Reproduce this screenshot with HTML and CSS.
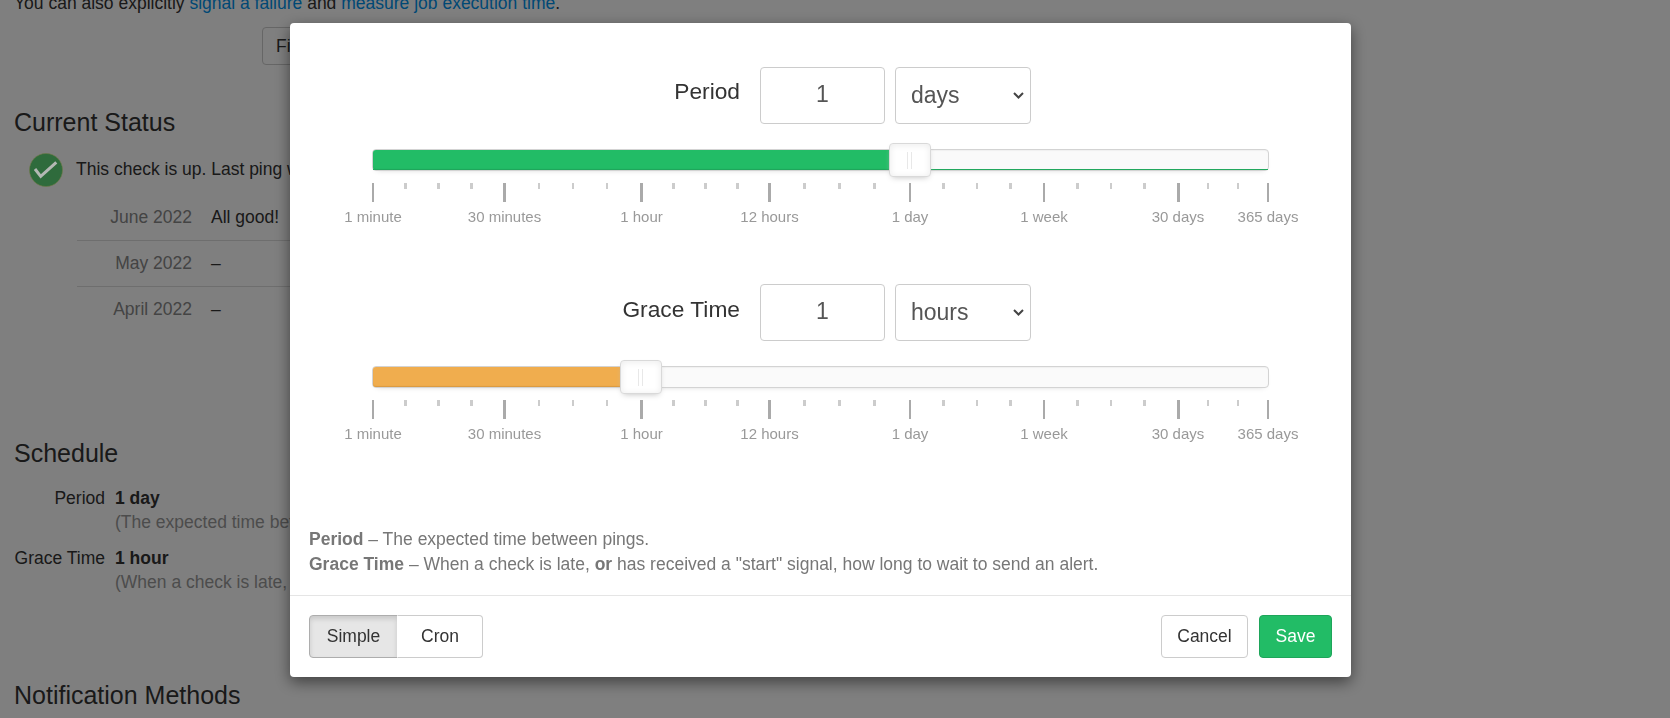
FILE: index.html
```html
<!DOCTYPE html>
<html lang="en">
<head>
    <meta charset="UTF-8">
    <meta name="viewport" content="width=device-width, initial-scale=1.0">
    <title>Check Details</title>
    <link rel="stylesheet" href="styles.css">
</head>
<body>
    <div class="page">
        <p class="intro">You can also explicitly <a href="#">signal a failure</a> and <a href="#">measure job execution time</a>.</p>
        <div class="intro-actions"><button type="button" class="btn">Filtering Rules</button></div>

        <h2 class="status-title">Current Status</h2>
        <div class="status-line">
            <svg class="status-icon" viewBox="0 0 34 34" aria-hidden="true">
                <circle cx="17" cy="17" r="16.5"></circle>
                <path d="M6 16l5.7 7.3L27.3 9.3"></path>
            </svg>
            <span class="status-text">This check is up. Last ping was 2 minutes ago.</span>
        </div>
        <table class="months">
            <tr><th>June 2022</th><td>All good!</td></tr>
            <tr><th>May 2022</th><td>–</td></tr>
            <tr><th>April 2022</th><td>–</td></tr>
        </table>

        <h2 class="schedule-title">Schedule</h2>
        <div class="schedule">
            <div class="schedule-key">Period</div>
            <div class="schedule-val"><b>1 day</b><small>(The expected time between pings.)</small></div>
            <div class="schedule-key">Grace Time</div>
            <div class="schedule-val"><b>1 hour</b><small>(When a check is late, or has received a "start" signal, how long to wait to send an alert.)</small></div>
        </div>

        <h2 class="methods-title">Notification Methods</h2>
    </div>

    <div class="backdrop"></div>

    <form class="modal">
        <div class="modal-body">
            <div class="field-row">
                <label for="period-value">Period</label>
                <input type="text" id="period-value" value="1">
                <select>
                    <option>minutes</option>
                    <option>hours</option>
                    <option selected>days</option>
                </select>
            </div>
            <div class="slider-wrap" data-handle="538">
                <div class="slider">
                    <div class="slider-under slider-under-green"></div>
                    <div class="slider-fill slider-fill-green"></div>
                    <div class="slider-handle"></div>
                </div>
                <div class="pips"></div>
            </div>

            <div class="field-row field-row-grace">
                <label for="grace-value">Grace Time</label>
                <input type="text" id="grace-value" value="1">
                <select>
                    <option>minutes</option>
                    <option selected>hours</option>
                    <option>days</option>
                </select>
            </div>
            <div class="slider-wrap" data-handle="269">
                <div class="slider">
                    <div class="slider-fill slider-fill-orange"></div>
                    <div class="slider-handle"></div>
                </div>
                <div class="pips"></div>
            </div>

            <div class="help">
                <strong>Period</strong> – The expected time between pings.<br>
                <strong>Grace Time</strong> – When a check is late, <strong>or</strong> has received a "start" signal, how long to wait to send an alert.
            </div>
        </div>
        <div class="modal-footer">
            <div class="btn-group">
                <button type="button" class="btn btn-simple active">Simple</button>
                <button type="button" class="btn btn-cron">Cron</button>
            </div>
            <div class="footer-right">
                <button type="button" class="btn btn-cancel">Cancel</button>
                <button type="button" class="btn btn-save">Save</button>
            </div>
        </div>
    </form>

    <script src="script.js"></script>
</body>
</html>
```

FILE: styles.css
```css
* {
    box-sizing: border-box;
}

html, body {
    height: 100%;
}

body {
    margin: 0;
    overflow: hidden;
    background: #fff;
    color: #333;
    font-family: "Liberation Sans", Arial, sans-serif;
    font-size: 17.5px;
    line-height: 24px;
}

a {
    color: #0091ea;
    text-decoration: none;
}

h2 {
    margin: 0;
    font-size: 25px;
    font-weight: normal;
    line-height: 30px;
    color: #333;
}

.page {
    padding-left: 14px;
    margin-top: -9px;
}

.intro {
    margin: 0;
}

.intro-actions {
    padding: 12px 0 0 248px;
}

.intro-actions .btn {
    width: 180px;
    height: 38px;
    text-align: left;
    padding-left: 13px;
}

.status-title {
    margin-top: 42px;
}

.status-line {
    display: flex;
    align-items: center;
    gap: 13px;
    margin: 16px 0 0 15px;
}

.status-text {
    padding-bottom: 3px;
}

/* drawn above the backdrop, colours are already the dimmed ones */
.status-icon {
    position: relative;
    z-index: 1;
    width: 34px;
    height: 34px;
    flex: none;
}

.status-icon circle {
    fill: #2f6b3c;
    stroke: #6f7a45;
    stroke-width: 0.6;
}

.status-icon path {
    fill: none;
    stroke: #b4b8b4;
    stroke-width: 3;
}

.months {
    margin: 7px 0 0 63px;
    border-collapse: collapse;
    width: 600px;
}

.months th {
    width: 115px;
    height: 46px;
    padding: 0;
    font-weight: normal;
    text-align: right;
    color: #888;
}

.months td {
    padding: 0 0 0 19px;
    color: #333;
}

.months tr + tr {
    border-top: 1px solid #ddd;
}

.schedule-title {
    margin-top: 106px;
}

.schedule {
    display: grid;
    grid-template-columns: 91px 1fr;
    column-gap: 10px;
    row-gap: 12px;
    margin-top: 18px;
}

.schedule-key {
    text-align: right;
}

.schedule-val b {
    display: block;
}

.schedule-val small {
    display: block;
    font-size: 17.5px;
    color: #999;
}

.methods-title {
    margin-top: 86px;
}

.backdrop {
    position: fixed;
    inset: 0;
    background: rgba(0, 0, 0, 0.5);
}

.modal {
    position: fixed;
    z-index: 2;
    left: 290px;
    top: 23px;
    width: 1061px;
    height: 654px;
    display: flex;
    flex-direction: column;
    background: #fff;
    border-radius: 4px;
    box-shadow: 0 5px 15px rgba(0, 0, 0, 0.5);
}

.modal-body {
    flex: 1;
    padding: 44px 19px 0;
}

.field-row {
    display: grid;
    grid-template-columns: 430px 125px 136px;
    align-items: start;
    height: 57px;
}

.field-row-grace {
    margin-top: 51px;
}

.field-row label {
    padding-top: 11px;
    font-size: 22.75px;
    line-height: 26px;
    text-align: right;
    color: #333;
    margin-right: -1px;
}

.field-row-grace label {
    padding-top: 12px;
}

.field-row input,
.field-row select {
    height: 57px;
    border: 1px solid #ccc;
    border-radius: 4px;
    background-color: #fff;
    color: #555;
    font-family: inherit;
    font-size: 23px;
}

.field-row input {
    margin-left: 21px;
    width: 125px;
    padding-bottom: 3px;
    text-align: center;
}

.field-row select {
    appearance: none;
    margin-left: 31px;
    width: 136px;
    padding: 0 24px 2px 15px;
    background-image: url("data:image/svg+xml,%3Csvg xmlns='http://www.w3.org/2000/svg' width='11' height='7'%3E%3Cpath d='M1 1l4.5 4.5L10 1' fill='none' stroke='%23444' stroke-width='2'/%3E%3C/svg%3E");
    background-repeat: no-repeat;
    background-position: right 6px center;
}

.slider-wrap {
    margin: 25px 0 0 63px;
    width: 897px;
}

.slider {
    position: relative;
    height: 22px;
    border: 1px solid #d3d3d3;
    border-radius: 4px;
    background: #fafafa;
    box-shadow: inset 0 1px 1px #f0f0f0, 0 3px 6px -5px #bbb;
}

.slider-fill {
    position: absolute;
    left: 0;
    top: 0;
    bottom: 0;
    border-radius: 3px 0 0 3px;
}

.slider-fill-green {
    background: #22bc66;
    box-shadow: inset 0 -1px 1px #1ea55a;
}

.slider-fill-orange {
    background: #f0ad4e;
    box-shadow: inset 0 -1px 1px #d99a42;
}

.slider-under {
    position: absolute;
    left: 0;
    right: 0;
    bottom: 0;
    height: 1px;
}

.slider-under-green {
    background: #22a85e;
}

.slider-handle {
    position: absolute;
    top: -7px;
    width: 42px;
    height: 34px;
    margin-left: -22px;
    border: 1px solid #d9d9d9;
    border-radius: 4px;
    background: #fff;
    box-shadow: inset 0 0 1px #fff, inset 0 1px 7px #ebebeb, 0 3px 6px -3px #bbb;
}

.slider-handle::before,
.slider-handle::after {
    content: "";
    position: absolute;
    top: 8px;
    width: 1px;
    height: 17px;
    background: #e8e8e8;
}

.slider-handle::before {
    left: 17px;
}

.slider-handle::after {
    left: 21px;
}

.pips {
    position: relative;
    height: 50px;
    margin-top: 12px;
}

.pip {
    position: absolute;
    top: 0;
    height: 6px;
    background: #ccc;
}

.pip-large {
    height: 19px;
    background: #aaa;
}

.pip-label {
    position: absolute;
    top: 24px;
    font-size: 15px;
    line-height: 20px;
    color: #999;
    white-space: nowrap;
    transform: translateX(-50%);
}

.help {
    margin-top: 77px;
    font-size: 17.5px;
    line-height: 25px;
    color: #777;
}

.modal-footer {
    display: flex;
    justify-content: space-between;
    height: 82px;
    padding: 19px 19px 0;
    border-top: 1px solid #e5e5e5;
}

.btn {
    height: 43px;
    padding: 0;
    border: 1px solid #ccc;
    border-radius: 4px;
    background: #fff;
    color: #333;
    font-family: inherit;
    font-size: 17.5px;
}

.btn-group {
    display: flex;
}

.btn-simple {
    width: 89px;
    border-radius: 4px 0 0 4px;
}

.btn-simple.active {
    background: #e6e6e6;
    border-color: #adadad;
    box-shadow: inset 0 3px 5px rgba(0, 0, 0, 0.125);
}

.btn-cron {
    width: 86px;
    margin-left: -1px;
    border-left-color: transparent;
    border-radius: 0 4px 4px 0;
}

.footer-right {
    display: flex;
    gap: 11px;
}

.btn-cancel {
    width: 87px;
}

.btn-save {
    width: 73px;
    background: #22bc66;
    border-color: #1ea55a;
    color: #fff;
}
```

FILE: script.js
```js
// tick positions in px from the slider's left edge, with the tick's width
const largePips = [
    [1, 2, "1 minute"],
    [132.5, 3, "30 minutes"],
    [269.5, 3, "1 hour"],
    [397.5, 3, "12 hours"],
    [538, 2, "1 day"],
    [672, 2, "1 week"],
    [806, 3, "30 days"],
    [896, 2, "365 days"]
];
const smallPips = [
    [33, 3], [66, 3], [99, 3],
    [167, 2], [201, 2], [235, 2],
    [301, 3], [333, 3], [365, 3],
    [432, 3], [467, 3], [502, 3],
    [571, 3], [605, 2], [638, 3],
    [705, 3], [739, 2], [772, 3],
    [836, 2], [866, 2]
];

function addPip(parent, pos, width, className) {
    const pip = document.createElement('div');
    pip.className = className;
    pip.style.left = (pos - width / 2) + 'px';
    pip.style.width = width + 'px';
    parent.appendChild(pip);
}

for (const wrap of document.querySelectorAll('.slider-wrap')) {
    const handlePos = parseFloat(wrap.dataset.handle);
    const pips = wrap.querySelector('.pips');

    wrap.querySelector('.slider-fill').style.width = (handlePos - 2) + 'px';
    wrap.querySelector('.slider-handle').style.left = handlePos + 'px';

    for (const [pos, width] of smallPips) {
        addPip(pips, pos, width, 'pip');
    }

    for (const [pos, width, text] of largePips) {
        addPip(pips, pos, width, 'pip pip-large');

        const label = document.createElement('div');
        label.className = 'pip-label';
        label.style.left = pos + 'px';
        label.textContent = text;
        pips.appendChild(label);
    }
}
```
